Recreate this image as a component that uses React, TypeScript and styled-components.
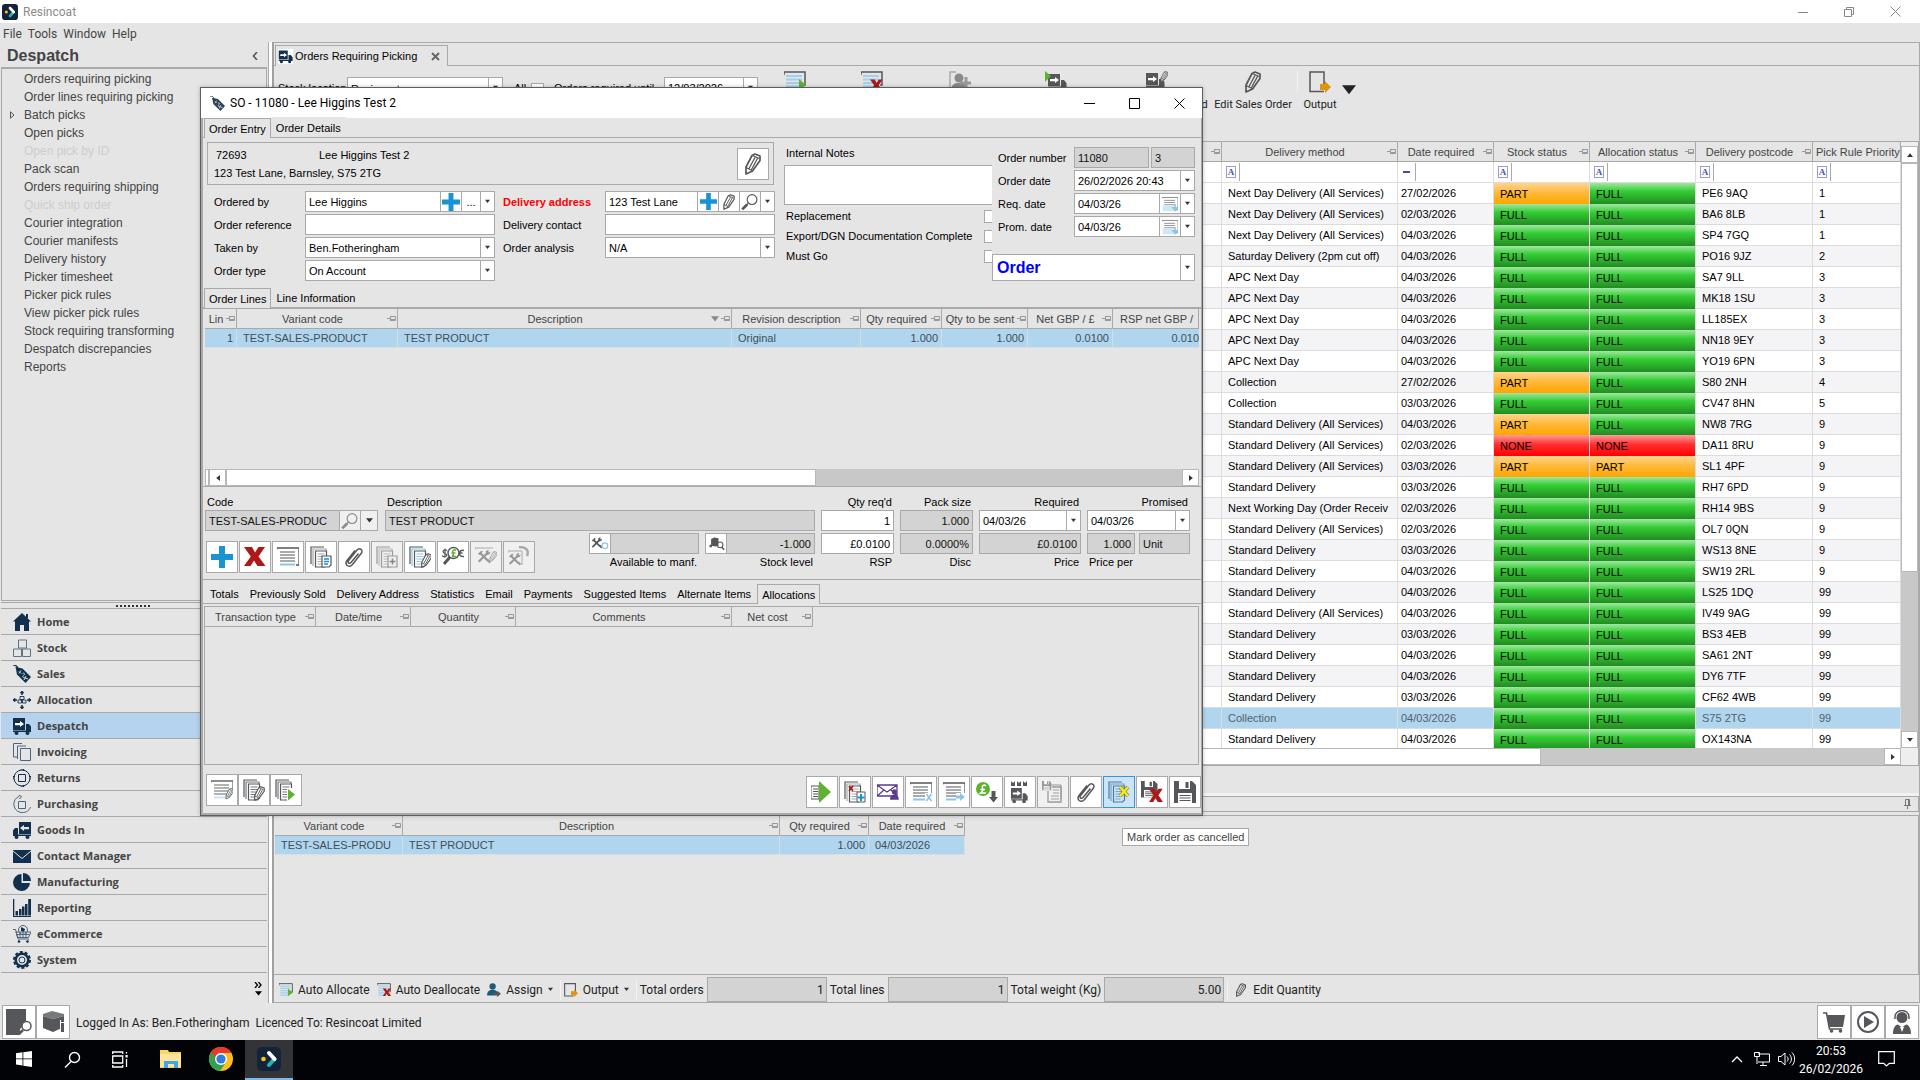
import React from "react";
import styled, { createGlobalStyle, css } from "styled-components";

const UI = `"Liberation Sans", Arial, sans-serif`;
const SEGOE = `Roboto, "Open Sans", sans-serif`;
const NAVFONT = `"Open Sans", "Noto Sans", sans-serif`;
const LINE = "#a9a9a9";
const FACE = "#e5e5e5";
const NAVY = "#12304d";
const GREY = "#55575a";
const BLUE = "#1a93d3";
const GREEN = "#5fb130";
const RED = "#b01717";
const SKY = "#8cc4ea";

const GlobalStyle = createGlobalStyle`
  * { box-sizing: border-box; }
  html, body, #root { margin: 0; height: 100%; }
  body { overflow: hidden; background: ${FACE}; font: 11px/14px ${UI}; color: #000; }
  button, input, select, textarea { font: inherit; color: inherit; margin: 0; padding: 0; border-radius: 0; }
  svg { display: block; flex: none; }
`;

/* ---------- drawings ---------- */

type SvgProps = { w?: number; h?: number; box?: string; children?: React.ReactNode };
const Svg = ({ w = 22, h, box, children }: SvgProps) => (
  <svg width={w} height={h ?? w} viewBox={box ?? "0 0 22 22"} fill="none" aria-hidden="true">
    {children}
  </svg>
);

const DocsShape = ({ c = GREY, lines = "#a5a7aa", fill = "#fff" }) => (
  <g stroke={c} strokeWidth="1.2">
    <path d="M1 18V1h13" />
    <path d="M3 20V3h13v2" stroke={lines} />
    <path d="M5.500 21h9l2-2V5h-11z" fill={fill} />
    <path d="M7.500 8h7M7.500 10.500h7M7.500 13h7M7.500 15.500h5M7.500 18h5" stroke={lines} />
  </g>
);
const PencilShape = ({ c = GREY, t = "", fill = "#fff" }) => (
  <g transform={t} stroke={c} strokeWidth="1.700" strokeLinejoin="round" fill={fill}>
    <path d="M4 21v-7L10 2.500l3-1.500 5 2v4.500L10.500 18z" />
    <path d="M7 15.500l6-11M9.500 16.500l6-11M4 14.500l6 3M10.500 2.500l6.500 3" strokeWidth="1.300" />
  </g>
);
const LinesShape = ({ c = GREY, accent = SKY }) => (
  <g>
    <path d="M0 3.500V2h22v17h-3" stroke={c} strokeWidth="1.300" />
    <path d="M3 6h15M3 9h15M3 12h15M3 15h15" stroke={c} strokeWidth="1.200" />
    <path d="M3 18.500h15" stroke={accent} strokeWidth="2" />
  </g>
);
const ToolsShape = ({ c = GREY, t = "" }) => (
  <g transform={t}>
    <path d="M2 15L12 5M4 5l9 9" stroke={c} strokeWidth="2.600" />
    <path d="M1 6l4-4 2 1-4 4zM10 3l3-2 1 1-1 1 1 1 2-1-1 3-3 1zM11.500 13l2-1 3 3-2 2z" fill={c} />
  </g>
);
const TruckShape = ({ c = NAVY, t = "", arrow = "#fff" }) => (
  <g transform={t}>
    <path d="M0 1h12v12H0zM13 7h3l2.500 3v5H0v-1.500h13z" fill={c} />
    <path d="M2 6h5V4l4 3-4 3V8.200H2z" fill={arrow} />
    <circle cx="3.500" cy="16" r="2" fill={c} />
    <circle cx="14.500" cy="16" r="2" fill={c} />
  </g>
);
const TagShape = ({ c = NAVY }) => (
  <g>
    <path d="M0 0c3 0 4 1 5 3" stroke={c} strokeWidth="1.200" />
    <path d="M2.500 2l7 1.500L18 12l-5.500 6L4 9.500z" fill={c} />
    <path d="M6 6.500l2 2M8 5.500l-2 3M9.500 8.500c2-1 3 1 1 2s0 3 2 2M13 11l-2 4M12 13l3 1" stroke="#cfd8e0" strokeWidth="1" />
  </g>
);
const MagShape = ({ c = GREY, t = "" }) => (
  <g transform={t}>
    <circle cx="13.500" cy="8" r="6" stroke={c} strokeWidth="1.400" />
    <path d="M9 12.500l-2 2" stroke={c} strokeWidth="1.600" />
    <path d="M7.500 14l-6 6" stroke={c} strokeWidth="3.200" />
  </g>
);
const CrossShape = ({ c = RED, t = "" }) => (
  <path transform={t} fill={c} d="M0 1h8l3 5.500L14.500 1H21l-6.500 9.500L21.500 20h-8L10 14.500 6.500 20H0l6.800-9.500z" />
);
const ClipShape = () => (
  <path d="M15.500 7.500L8 16.500c-1.500 1.800-4 .2-2.600-1.800L14 4c2.500-3 6.600.2 4.300 3.200L9.500 18.500C6 22.500.8 18.500 4 14.500L12 4.500" stroke={GREY} strokeWidth="1.500" />
);
const FloppyShape = ({ c = GREY, t = "" }) => (
  <g transform={t}>
    <path d="M0 0h18l4 4v18H0z" fill={c} />
    <path d="M5 0h11v8H5zM4 12h14v10H4z" fill="#fff" />
    <path d="M11.500 1h3v6h-3z" fill={c} />
    <path d="M5.500 14.500h11M5.500 17h11M5.500 19.500h11" stroke={c} strokeWidth="1.200" />
  </g>
);
const PersonShape = ({ c = GREY, t = "" }) => (
  <g transform={t} fill={c}>
    <circle cx="8" cy="5" r="4.500" />
    <path d="M0 18c0-5 2-7 5-8h6c3 1 5 3 5 8z" />
  </g>
);
const AllocShape = ({ c = GREY }) => (
  <g>
    <path d="M0 4V1h21v13h-2" stroke={c} strokeWidth="1.500" />
    <path d="M2 5h16M2 8.500h16M2 12h16M2 15.500h13M2 19h12" stroke="#9fd0ef" strokeWidth="1.800" />
  </g>
);

const Pin = () => (
  <Svg w={9} h={7} box="0 0 9 7">
    <path d="M0 3.500h3M3.500 1v5" stroke="#999" />
    <path d="M4 1.500h4.500v4H4M4 4.500h4" stroke="#999" />
  </Svg>
);
const Logo = ({ w = 16 }) => (
  <Svg w={w} box="0 0 24 24">
    <rect width="24" height="24" rx="5" fill="#12233a" />
    <circle cx="6.500" cy="12" r="2.300" fill="#f9c80e" />
    <path d="M12 18l5.500-6" stroke="#24b5b0" strokeWidth="4" strokeLinecap="round" />
    <path d="M12 6l5.500 6" stroke="#fff" strokeWidth="4" strokeLinecap="round" />
  </Svg>
);
const Tri = ({ dir = "down", c = "#333", w = 6 }: { dir?: string; c?: string; w?: number }) => {
  const turn = { down: 0, left: 90, up: 180, right: 270 }[dir] ?? 0;
  return (
    <Svg w={w} box="0 0 6 6">
      <path transform={`rotate(${turn} 3 3)`} d="M0 1h6L3 4.800z" fill={c} />
    </Svg>
  );
};

const I = {
  plus: <Svg><path d="M8 0h6v8h8v6h-8v8H8v-8H0V8h8z" fill={BLUE} /></Svg>,
  cross: <Svg><CrossShape /></Svg>,
  lines: <Svg><LinesShape /></Svg>,
  docsCopy: <Svg><DocsShape /><path d="M12 10h9v9l-2 2h-7z" fill="#fff" stroke={GREY} strokeWidth="1.200" /><path d="M14 13h5M14 15.500h5M14 18h4" stroke={BLUE} strokeWidth="1.500" /></Svg>,
  clip: <Svg><ClipShape /></Svg>,
  docsAdd: <Svg><DocsShape c="#999" lines="#bbb" fill="#f0f0f0" /><path d="M12 10h9v11h-9z" fill="#f0f0f0" stroke="#999" strokeWidth="1.200" /><path d="M16.500 12.500v6M13.500 15.500h6" stroke="#888" strokeWidth="1.600" /></Svg>,
  docsEdit: <Svg><DocsShape lines={SKY} /><PencilShape t="translate(10 7) scale(.68)" /></Svg>,
  docsEditGrey: <Svg><DocsShape lines="#77797c" /><PencilShape t="translate(9 7) scale(.68)" /></Svg>,
  currency: <Svg><circle cx="11.500" cy="7" r="5.500" stroke={GREY} strokeWidth="1.400" /><path d="M8 11l-6 7" stroke={GREY} strokeWidth="3" /><path d="M5 4.500C3 3 0 4.500 1.500 6.500S6 8 4.500 10 1 10.500 0 9.500M3 2.500v9" stroke={GREY} strokeWidth="1.200" /><path d="M14 4.500c-2-1.500-4 0-3 2.500s0 3-1 3.500h4.500M9.500 7h4" stroke={GREEN} strokeWidth="1.500" /><path d="M22 4.500c-3-1-4.500 1-4.500 3s1.500 3.500 4.500 3M16.500 7h4" stroke={GREY} strokeWidth="1.500" /></Svg>,
  toolsEdit: <Svg><path d="M0 4V2h18" stroke="#aaa" /><ToolsShape c="#999" t="translate(2 3) scale(.85)" /><PencilShape c="#999" fill="#f0f0f0" t="translate(13 5) scale(.5)" /></Svg>,
  toolsUndo: <Svg><path d="M0 7V5h14v14" stroke="#aaa" /><ToolsShape c="#999" t="translate(0 6) scale(.8)" /><path d="M11 1c8 0 10 4 8 9" stroke="#aaa" strokeWidth="2.500" /></Svg>,
  linesEdit: <Svg><LinesShape c="#66686b" accent="#c9e3f5" /><path d="M17 13h5v8h-8z" fill="#fff" /><PencilShape t="translate(13 9) scale(.52)" /></Svg>,
  docsRun: <Svg><DocsShape lines="#77797c" /><path d="M12 9h10v13H12z" fill="#fff" /><path d="M13 10l7 5.500-7 6z" fill={GREEN} /></Svg>,
  run: <Svg><path d="M0 5h8v13H0z" stroke={GREY} /><path d="M2 8h5M2 10.500h5M2 13h5M2 15.500h5" stroke={GREY} /><path d="M8 0l12 11L8 22z" fill={GREEN} /></Svg>,
  docsBlue: <Svg><DocsShape /><path d="M5 5l4 5M9 5l-4 5" stroke={RED} strokeWidth="1.600" /><path d="M13 11h8v10h-8z" fill="#fff" stroke={GREY} /><path d="M17 13v7M13.500 16.500h7" stroke={BLUE} strokeWidth="2" /></Svg>,
  mail: <Svg><path d="M0 4h20v11H0zM0 4l10 7 10-7M0 15l7-6M20 15l-6-6" stroke="#5c3a8c" strokeWidth="1.300" /><PersonShape c="#5c3a8c" t="translate(13 8) scale(.55 .6)" /></Svg>,
  linesX: <Svg><LinesShape /><path d="M15 12h7v9h-7z" fill="#fff" /><path d="M16.500 13l5 7M21.500 13l-5 7" stroke={SKY} strokeWidth="1.600" /></Svg>,
  linesGo: <Svg><LinesShape /><path d="M13 12h9v9h-9z" fill="#fff" /><path d="M13 14.500h4V12l5 4-5 4v-2.500h-4z" fill={SKY} /></Svg>,
  poundDown: <Svg><circle cx="7" cy="8" r="7" fill={GREEN} /><path d="M10 5c-2-2-4.500-.5-3.500 2S6 11 4.500 12H10M4.500 8.500h4.500" stroke="#fff" strokeWidth="1.500" /><path d="M15.500 10h4v6h2.500l-4.500 5.500-4.500-5.500h2.500z" fill={GREY} /></Svg>,
  truck: <Svg><path d="M2 0l2 2 2-2v5H2zM8 0l2 2 2-2v5H8zM14 0l2 2 2-2v5h-4z" fill={GREY} /><TruckShape c={GREY} t="translate(2 6) scale(.9)" /></Svg>,
  saveDocs: <Svg><FloppyShape c="#999" t="scale(.42)" /><path d="M8 6V4h11v14" stroke="#999" /><path d="M10 6h9v15H6V10" stroke="#999" strokeWidth="1.300" /><path d="M11 9h6M11 12h6M9 15h8M9 18h8" stroke="#bbb" strokeWidth="1.300" /></Svg>,
  docsCancel: <Svg><DocsShape c="#4e7a9c" lines="#7da3c0" fill="#cce4f7" /><path d="M12 6l8 9M20 6l-8 9" stroke="#8d8520" strokeWidth="3.600" /><path d="M12 6l8 9M20 6l-8 9" stroke="#f7e928" strokeWidth="2.400" /></Svg>,
  saveX: <Svg><FloppyShape t="scale(.75)" /><CrossShape t="translate(8 7) scale(.65 .7)" /></Svg>,
  save: <Svg><FloppyShape /></Svg>,
};

/* ---------- shared parts ---------- */

const Bar = styled.div<{ $gap?: number }>`
  display: flex;
  align-items: center;
  gap: ${p => p.$gap ?? 0}px;
`;
const Grow = styled.div`
  flex: 1;
  min-width: 0;
`;
const Field = styled.div<{ $ro?: boolean; $w?: number; $tall?: boolean }>`
  display: flex;
  ${p => (p.$w ? `width: ${p.$w}px;` : "")}
  height: ${p => (p.$tall ? 27 : 21)}px;
  border: 1px solid ${LINE};
  background: ${p => (p.$ro ? "#d3d3d3" : "#fff")};
  color: ${p => (p.$ro ? "#111" : "#000")};
`;
const control = css<{ $right?: boolean }>`
  flex: 1;
  min-width: 0;
  width: 100%;
  height: 100%;
  border: 0;
  outline: 0;
  background: transparent;
  appearance: none;
  padding: 0 3px;
  text-align: ${p => (p.$right ? "right" : "left")};
`;
const Input = styled.input`${control}`;
const Select = styled.select<{ $big?: boolean }>`
  ${control}
  ${p => (p.$big ? "font: bold 16px/24px " + UI + "; color: #00f; padding: 0 4px;" : "")}
`;
const Cell = styled.button<{ $w: number; $dim?: boolean; $lead?: boolean }>`
  display: flex;
  align-items: center;
  justify-content: center;
  width: ${p => p.$w}px;
  border: solid ${LINE};
  border-width: ${p => (p.$lead ? "0 1px 0 0" : "0 0 0 1px")};
  background: ${p => (p.$dim ? "#f0f0f0" : "#fff")};
  flex: none;
`;
const Drop = () => <Cell $w={14} aria-label="Open list"><Tri w={5} /></Cell>;
const DropMark = styled.span`
  display: flex;
  align-items: center;
  justify-content: center;
  width: 14px;
  border-left: 1px solid ${LINE};
`;
const Combo = ({ id, value, label, $big }: { id?: string; value: string; label?: string; $big?: boolean }) => (
  <Field $tall={$big}>
    <Select id={id} aria-label={label} defaultValue={value} $big={$big}><option>{value}</option></Select>
    <DropMark><Tri w={5} /></DropMark>
  </Field>
);
const Tool = styled.button<{ $off?: boolean; $hot?: boolean; $size?: number }>`
  display: flex;
  align-items: center;
  justify-content: center;
  width: ${p => p.$size ?? 32}px;
  height: ${p => p.$size ?? 32}px;
  border: 1px solid ${p => (p.$hot ? "#3c94d8" : LINE)};
  background: ${p => (p.$hot ? "#cce4f7" : p.$off ? "#f0f0f0" : "#fff")};
  flex: none;
`;
const Tabs = styled.div<{ $thick?: boolean; $h?: number; $gap?: number }>`
  display: flex;
  align-items: flex-end;
  gap: ${p => p.$gap ?? 0}px;
  height: ${p => p.$h ?? 20}px;
  padding-left: ${p => (p.$gap ? 2 : 1)}px;
  border-bottom: ${p => (p.$thick ? 2 : 1)}px solid ${LINE};
  flex: none;
`;
const Tab = styled.button<{ $on?: boolean }>`
  height: 20px;
  padding: 0 4px;
  border: 1px solid ${p => (p.$on ? LINE : "transparent")};
  border-bottom: 0;
  background: ${FACE};
  margin-bottom: ${p => (p.$on ? -1 : 0)}px;
  white-space: nowrap;
`;
const Table = styled.table`
  table-layout: fixed;
  border-collapse: separate;
  border-spacing: 0;
  width: 100%;
`;
const Th = styled.th`
  height: 20px;
  padding: 0 1px 0 3px;
  border-right: 1px solid ${LINE};
  border-bottom: 1px solid ${LINE};
  background: ${FACE};
  font-weight: normal;
  color: #444;
  overflow: hidden;
`;
const HeadBox = styled.div`
  display: flex;
  align-items: center;
  gap: 2px;
  white-space: nowrap;
  span { flex: 1; }
`;
const Head = ({ text, pin = true, sort }: { text: string; pin?: boolean; sort?: boolean }) => (
  <Th scope="col"><HeadBox><span>{text}</span>{sort && <Tri w={8} c="#888" />}{pin && <Pin />}</HeadBox></Th>
);
const Num = styled.td`
  text-align: right;
`;
const SelRow = styled.tr<{ $flush?: boolean }>`
  td {
    height: 19px;
    padding: 0 3px 0 6px;
    background: #b0d6ef;
    border-right: 1px solid #d7dde2;
    border-bottom: 1px solid #d7dde2;
    color: #444c55;
    white-space: nowrap;
    overflow: hidden;
  }
  ${p => (p.$flush ? "td:last-child { padding-right: 0; border-right: 0; }" : "")}
`;
const ScrollBtn = styled.button`
  display: flex;
  align-items: center;
  justify-content: center;
  width: 17px;
  height: 17px;
  border: 1px solid #b8b8b8;
  background: #fff;
  flex: none;
`;
const HTrack = styled.div`
  display: flex;
  height: 17px;
  background: #c8c8c8;
  flex: none;
`;
const Thumb = styled.div<{ $size: string; $v?: boolean }>`
  ${p => (p.$v ? "height" : "width")}: ${p => p.$size};
  background: #fff;
  border: 1px solid #b8b8b8;
`;
const Sep = styled.i`
  width: 1px;
  height: 20px;
  background: #f4f4f4;
`;

/* ---------- shell ---------- */

const Page = styled.div`
  position: relative;
  display: flex;
  flex-direction: column;
  height: 100vh;
  overflow: hidden;
`;
const TitleBar = styled.header`
  display: flex;
  align-items: center;
  height: 23px;
  padding: 0 2px;
  background: #fff;
  color: #8a8a8a;
  font: 12px/16px ${SEGOE};
  span { margin-left: 5px; flex: 1; }
`;
const WinBtn = styled.button<{ $w: number }>`
  display: flex;
  justify-content: center;
  align-items: center;
  width: ${p => p.$w}px;
  height: 20px;
  border: 0;
  background: transparent;
`;
const MenuBar = styled.nav`
  display: flex;
  height: 19px;
  padding: 3px 3px 0;
  gap: 6px;
  button { border: 0; background: none; color: #444; font: 12px/16px ${SEGOE}; }
`;
const Work = styled.div`
  display: flex;
  flex: 1;
  min-height: 0;
`;
const Side = styled.aside`
  display: flex;
  flex-direction: column;
  width: 268px;
  padding: 0 1px;
  flex: none;
`;
const SideHead = styled.div`
  display: flex;
  align-items: center;
  justify-content: space-between;
  height: 25px;
  padding: 2px 8px 0 6px;
  h1 { margin: 0; font: bold 16px/20px ${UI}; color: #444; }
`;
const SideList = styled.ul`
  flex: 1;
  margin: 0;
  padding: 1px 0 0;
  list-style: none;
  border: 1px solid ${LINE};
  border-top-width: 2px;
`;
const SideItem = styled.li<{ $off?: boolean }>`
  display: flex;
  align-items: center;
  height: 18px;
  padding-left: 8px;
  i { width: 14px; }
  a { color: ${p => (p.$off ? "#cdcdcd" : "#444")}; text-decoration: none; font-size: 12px; }
`;
const Grip = styled.div`
  display: flex;
  justify-content: center;
  align-items: center;
  height: 7px;
  margin-top: 1px;
  border: solid ${LINE};
  border-width: 1px 0;
`;
const NavItem = styled.button<{ $on?: boolean }>`
  display: flex;
  align-items: center;
  gap: 6px;
  height: 26px;
  padding: 1px 0 0 12px;
  border: 0;
  border-bottom: 1px solid ${LINE};
  background: ${p => (p.$on ? "#b5d3ef" : "transparent")};
  font: bold 11px/16px ${NAVFONT};
  color: #444;
  flex: none;
`;
const NavMore = styled.div`
  display: flex;
  flex-direction: column;
  align-items: flex-end;
  gap: 2px;
  height: 30px;
  padding: 9px 5px;
`;
const Split = styled.div`
  width: 4px;
  background: #fff;
  border-left: 1px solid ${LINE};
`;
const Main = styled.main`
  display: flex;
  flex-direction: column;
  flex: 1;
  min-width: 0;
  border: 1px solid ${LINE};
  border-left: 2px solid #a0a0a0;
`;
const DocTab = styled.button`
  display: flex;
  align-items: center;
  gap: 2px;
  height: 21px;
  width: 173px;
  padding: 0 7px 0 2px;
  border: 1px solid ${LINE};
  border-bottom: 0;
  margin-bottom: -1px;
  background: ${FACE};
  span { flex: 1; text-align: left; white-space: nowrap; }
`;
const Ribbon = styled.div`
  display: flex;
  height: 75px;
  padding: 5px 4px 0;
  flex: none;
`;
const Filters = styled.div`
  display: flex;
  align-items: flex-start;
  width: 481px;
  padding-top: 6px;
  line-height: 23px;
  flex: none;
  white-space: nowrap;
  input[type="checkbox"] { appearance: none; width: 13px; height: 13px; margin: 6px 10px 0 0; border: 1px solid ${LINE}; background: #fff; }
`;
const FilterLabel = styled.label<{ $w: number; $end?: boolean }>`
  width: ${p => p.$w}px;
  padding-left: ${p => (p.$end ? 11 : 0)}px;
  flex: none;
`;
const RibbonBtn = styled.button<{ $w: number }>`
  display: flex;
  flex-direction: column;
  align-items: center;
  gap: 4px;
  height: 45px;
  width: ${p => p.$w}px;
  border: 0;
  background: none;
  font: 11px/16px ${SEGOE};
  color: #222;
  white-space: nowrap;
  flex: none;
`;
const RibbonDrop = styled.button`
  display: flex;
  align-items: center;
  height: 37px;
  border: 0;
  background: none;
`;
const OrdersBox = styled.section`
  display: flex;
  flex: 1;
  min-height: 0;
  border: 1px solid ${LINE};
  border-left: 0;
`;
const OrdersCol = styled.div`
  display: flex;
  flex-direction: column;
  flex: 1;
  min-width: 0;
`;
const TableArea = styled.div`
  flex: 1;
  overflow: hidden;
`;
const VScroll = styled.div`
  display: flex;
  flex-direction: column;
  width: 17px;
  padding: 4px 0 17px;
  background: #eee;
`;
const VTrack = styled.div`
  flex: 1;
  background: #c8c8c8;
`;
const FilterRow = styled.tr`
  td { height: 21px; padding: 0; background: #fff; border-right: 1px solid #ddd; border-bottom: 1px solid #ddd; }
`;
const FilterCell = styled.div`
  display: flex;
  align-items: center;
  height: 20px;
  padding-left: 4px;
  i { width: 14px; height: 18px; border-right: 1px solid ${LINE}; display: flex; align-items: center; }
  b { font: bold 9px/10px "Liberation Serif", serif; color: #4a4ab5; border: 1px solid #9c9cd0; width: 10px; text-align: center; }
`;
const Row = styled.tr<{ $alt?: boolean; $sel?: boolean }>`
  td {
    height: 21px;
    padding: 0 2px 0 6px;
    border-right: 1px solid #dcdcdc;
    border-bottom: 1px solid #dcdcdc;
    background: ${p => (p.$sel ? "#b0d6ef" : p.$alt ? "#f4f4f6" : "#fff")};
    color: ${p => (p.$sel ? "#555f68" : "#000")};
    white-space: nowrap;
    overflow: hidden;
  }
  td:nth-child(3) { padding-left: 3px; }
`;
const fills: Record<string, string> = {
  F: "linear-gradient(#a2e6a2, #32cd32 40%, #2fbd2f 55%, #228b22)",
  P: "linear-gradient(#ffd590, #ffb93c 45%, #ffa500)",
  N: "linear-gradient(#ff9a9a, #ff3030 45%, #f00)",
};
const Status = styled.td<{ $kind: string }>`
  && { background: ${p => fills[p.$kind]}; border-bottom: 0; color: #000; }
`;
const Gap = styled.div`
  height: 30px;
  border-bottom: 3px solid #f2f2f2;
  flex: none;
`;
const PanelHead = styled.div`
  display: flex;
  align-items: center;
  justify-content: flex-end;
  height: 16px;
  padding-right: 7px;
  border: 1px solid ${LINE};
  flex: none;
`;
const Lower = styled.section`
  height: 160px;
  margin-top: 3px;
  border: solid ${LINE};
  border-width: 1px 1px 1px 0;
  flex: none;
`;
const LowerTable = styled.div`
  width: 691px;
  padding-left: 1px;
`;
const FootBar = styled.div`
  display: flex;
  align-items: center;
  height: 27px;
  padding: 2px 0 0 5px;
  font: 12px/16px ${SEGOE};
  color: #222;
  flex: none;
  white-space: nowrap;
`;
const FootBtn = styled.button`
  display: flex;
  align-items: center;
  gap: 5px;
  border: 0;
  background: none;
  margin-right: 7px;
`;
const FootLabel = styled.label`
  padding: 0 3px;
`;
const Total = styled.input`
  width: 120px;
  height: 25px;
  border: 1px solid ${LINE};
  background: #d3d3d3;
  text-align: right;
  padding-right: 2px;
`;
const StatusBar = styled.footer`
  display: flex;
  align-items: center;
  height: 37px;
  padding: 0 1px 0 2px;
  font: 12px/16px ${SEGOE};
  color: #222;
  p { margin: 0 0 0 6px; padding-top: 3px; flex: 1; white-space: pre; }
`;
const TaskBar = styled.div`
  display: flex;
  align-items: center;
  height: 40px;
  background: #020307;
  color: #fff;
  font: 12px/18px ${SEGOE};
  flex: none;
`;
const Task = styled.button<{ $on?: boolean; $w?: number }>`
  display: flex;
  align-items: center;
  justify-content: center;
  width: ${p => p.$w ?? 48}px;
  height: 40px;
  border: 0;
  border-bottom: 2px solid ${p => (p.$on ? "#76b9ed" : "transparent")};
  background: ${p => (p.$on ? "#333437" : "transparent")};
`;
const Clock = styled.div`
  width: 66px;
  text-align: center;
`;

/* ---------- dialog ---------- */

const Dialog = styled.section`
  position: absolute;
  left: 200px;
  top: 87px;
  width: 1003px;
  height: 729px;
  display: flex;
  flex-direction: column;
  border: 1px solid #5d5d5d;
  background: ${FACE};
  box-shadow: 0 0 4px rgba(0, 0, 0, 0.25);
`;
const DialogTitle = styled.div`
  display: flex;
  align-items: center;
  gap: 5px;
  height: 30px;
  padding: 0 2px 0 9px;
  background: #fff;
  font: 12px/16px ${SEGOE};
  flex: none;
`;
const DialogBody = styled.div`
  display: flex;
  flex-direction: column;
  flex: 1;
  min-height: 0;
  border: solid ${LINE};
  border-width: 0 1px 2px 2px;
`;
const Top = styled.div`
  display: flex;
  height: 150px;
  padding: 4px 6px 0 4px;
  flex: none;
`;
const Left = styled.div`
  width: 567px;
  flex: none;
`;
const Customer = styled.div`
  display: flex;
  justify-content: space-between;
  align-items: center;
  height: 43px;
  padding: 0 4px 0 6px;
  border: 1px solid ${LINE};
  dl { display: grid; grid-template-columns: 105px auto; margin: 0; row-gap: 4px; }
  dd { margin: 0; }
  dd:last-child { grid-column: 1 / 3; }
  dt { padding-left: 2px; }
`;
const Form = styled.div`
  display: grid;
  grid-template-columns: 91px 190px 8px 102px 170px;
  row-gap: 2px;
  align-items: center;
  padding: 6px 0 0 7px;
  white-space: nowrap;
`;
const FormLabel = styled.label<{ $alert?: boolean; $second?: boolean }>`
  grid-column: ${p => (p.$second ? 4 : "auto")};
  ${p => (p.$alert ? "color: #f00; font-weight: bold;" : "")}
`;
const Notes = styled.div`
  flex: 1;
  min-width: 0;
  margin-left: 10px;
  padding-top: 4px;
  overflow: hidden;
  > label { padding-left: 2px; }
  textarea { display: block; width: 220px; height: 40px; margin: 5px 0 1px; border: 1px solid ${LINE}; resize: none; }
`;
const Tick = styled.div`
  display: flex;
  align-items: center;
  justify-content: space-between;
  width: 213px;
  height: 20px;
  padding-left: 2px;
  white-space: nowrap;
  input { appearance: none; width: 13px; height: 13px; border: 1px solid ${LINE}; background: #fff; }
`;
const Right = styled.div`
  width: 203px;
  padding-top: 5px;
  flex: none;
`;
const Heads = styled.div`
  display: grid;
  grid-template-columns: 76px 121px;
  gap: 2px 0;
  align-items: center;
  padding: 0 0 17px 6px;
`;
const Lines = styled.div`
  display: flex;
  flex-direction: column;
  justify-content: space-between;
  height: 178px;
  padding: 0 2px;
  border-bottom: 1px solid ${LINE};
  overflow: hidden;
  flex: none;
`;
const Detail = styled.div`
  height: 93px;
  padding: 9px 11px 0 2px;
  border-bottom: 1px solid ${LINE};
  flex: none;
  display: flex;
  gap: 6px;
  white-space: nowrap;
`;
const Stack = styled.div<{ $w?: number }>`
  display: flex;
  flex-direction: column;
  gap: 2px;
  ${p => (p.$w ? `width: ${p.$w}px; flex: none;` : "flex: 1; min-width: 0;")}
`;
const ToolRow = styled.div`
  display: flex;
  align-items: flex-start;
  gap: 6px;
`;
const LineTools = styled.div`
  display: flex;
  gap: 1px;
  padding: 8px 0 0 1px;
`;
const Cap = styled.label<{ $left?: boolean }>`
  display: block;
  height: 14px;
  line-height: 13px;
  padding: 0 2px;
  text-align: ${p => (p.$left ? "left" : "right")};
`;
const Alloc = styled.div`
  flex: 1;
  margin: 2px 2px 0 1px;
  border: 1px solid ${LINE};
`;
const AllocTable = styled.div`
  width: 608px;
`;
const DialogFoot = styled.div`
  display: flex;
  align-items: flex-end;
  justify-content: space-between;
  height: 48px;
  padding: 0 0 5px 3px;
  flex: none;
`;
const FootLeft = styled.div`
  display: flex;
  padding-bottom: 2px;
`;
const Tooltip = styled.div`
  position: absolute;
  left: 1122px;
  top: 828px;
  height: 18px;
  padding: 1px 4px;
  border: 1px solid ${LINE};
  background: #fff;
  color: #444;
  white-space: nowrap;
`;

/* ---------- data ---------- */

const sideLinks = ["Orders requiring picking", "Order lines requiring picking", "Batch picks", "Open picks", "Open pick by ID", "Pack scan", "Orders requiring shipping", "Quick ship order", "Courier integration", "Courier manifests", "Delivery history", "Picker timesheet", "Picker pick rules", "View picker pick rules", "Stock requiring transforming", "Despatch discrepancies", "Reports"];

const navs: [string, React.ReactNode][] = [
  ["Home", <path d="M9 0l9 8.500h-2V18h-5v-6H7v6H2V8.500H0zM13 1h2v4h-2z" fill={NAVY} />],
  ["Stock", <path d="M5.500 1h8v8h-8zM.5 10h8v7.500h-8zM9.500 10h8v7.500h-8z" stroke="#5c7489" strokeWidth="1" />],
  ["Sales", <TagShape />],
  ["Allocation", <g stroke={NAVY}><path d="M7 5.500h4v3H7zM5 9h3.500v3H5zM9.500 9H13v3H9.500z" strokeWidth=".9" /><path d="M9 0v4M9 14v4M0 9h4M14 9h4" strokeWidth="1.500" /><path d="M7 2l2-2 2 2zM7 16l2 2 2-2zM2 7L0 9l2 2zM16 7l2 2-2 2z" fill={NAVY} strokeWidth=".6" /></g>],
  ["Despatch", <TruckShape />],
  ["Invoicing", <g stroke="#4c657c"><path d="M.5 14V.5H9M.5 14H4M4.500 16V3H13" /><path d="M7.500 5.500h10V17.500h-10z" /></g>],
  ["Returns", <g stroke={NAVY} strokeWidth="1.2"><circle cx="9" cy="9" r="8" strokeWidth="1" /><path d="M5.500 5.500h7v7h-7z" strokeWidth="1" /><path d="M7.500 0h3v2M16 7.500h2v3M7.500 18h3v-2M2 7.500H0v3" /></g>],
  ["Purchasing", <g stroke="#4c657c"><path d="M6 1.500C-1 4-1 15 7 17.300c5 1 9-1 10.500-5.300" /><path d="M5.500 6.500h7v7h-7z" /><path d="M5.500 0l3 1.500-2 2.500" /></g>],
  ["Goods In", <g transform="translate(18 0) scale(-1 1)"><TruckShape arrow={FACE} /></g>],
  ["Contact Manager", <g><path d="M0 3h18v13H0z" fill={NAVY} /><path d="M0 4l9 7.500L18 4" stroke="#dfe4e9" /></g>],
  ["Manufacturing", <g fill={NAVY}><path d="M8.500 1a8.500 8.500 0 108.500 9H8.500z" /><path d="M10 0a8 8 0 018 8h-8z" /></g>],
  ["Reporting", <path d="M0 0h1.300v17H18v1H0zM2.500 12h2.500v4.500H2.500zM6 10h2.500v6.500H6zM9 7.500h2.500v9H9zM12 5h2.500v11.500H12zM15.200 0h2.800v16.500h-2.800z" fill={NAVY} />],
  ["eCommerce", <g><circle cx="10" cy="5" r="4.500" stroke="#4c657c" /><path d="M8 2l4 2-1 3-3-1z" fill={NAVY} /><path d="M0 4.500h2.500L5 14h11M3 7h15l-2.500 5.500H4.500zM3.500 9.500h13M7 7v5.500M10 7v5.500M13 7v5.500" stroke="#4c657c" /><circle cx="6" cy="16.500" r="1.300" fill={NAVY} /><circle cx="14.500" cy="16.500" r="1.300" fill={NAVY} /></g>],
  ["System", <g stroke={NAVY}><circle cx="9" cy="9" r="6.300" strokeWidth="2.600" /><circle cx="9" cy="9" r="8" strokeWidth="2" strokeDasharray="3 2.030" /><circle cx="9" cy="9" r="3" strokeWidth="1" /></g>],
];

const ND = "Next Day Delivery (All Services)", AP = "APC Next Day", SA = "Standard Delivery (All Services)", SD = "Standard Delivery", CO = "Collection";
const orders: [string, string, string, string, string][] = [
  [ND, "27/02/2026", "PF", "PE6 9AQ", "1"],
  [ND, "02/03/2026", "FF", "BA6 8LB", "1"],
  [ND, "04/03/2026", "FF", "SP4 7GQ", "1"],
  ["Saturday Delivery (2pm cut off)", "04/03/2026", "FF", "PO16 9JZ", "2"],
  [AP, "04/03/2026", "FF", "SA7 9LL", "3"],
  [AP, "04/03/2026", "FF", "MK18 1SU", "3"],
  [AP, "04/03/2026", "FF", "LL185EX", "3"],
  [AP, "04/03/2026", "FF", "NN18 9EY", "3"],
  [AP, "04/03/2026", "FF", "YO19 6PN", "3"],
  [CO, "27/02/2026", "PF", "S80 2NH", "4"],
  [CO, "03/03/2026", "FF", "CV47 8HN", "5"],
  [SA, "04/03/2026", "PF", "NW8 7RG", "9"],
  [SA, "02/03/2026", "NN", "DA11 8RU", "9"],
  [SA, "03/03/2026", "PP", "SL1 4PF", "9"],
  [SD, "03/03/2026", "FF", "RH7 6PD", "9"],
  ["Next Working Day (Order Receiv", "02/03/2026", "FF", "RH14 9BS", "9"],
  [SA, "02/03/2026", "FF", "OL7 0QN", "9"],
  [SD, "03/03/2026", "FF", "WS13 8NE", "9"],
  [SD, "04/03/2026", "FF", "SW19 2RL", "9"],
  [SD, "04/03/2026", "FF", "LS25 1DQ", "99"],
  [SA, "04/03/2026", "FF", "IV49 9AG", "99"],
  [SD, "03/03/2026", "FF", "BS3 4EB", "99"],
  [SD, "04/03/2026", "FF", "SA61 2NT", "99"],
  [SD, "04/03/2026", "FF", "DY6 7TF", "99"],
  [SD, "03/03/2026", "FF", "CF62 4WB", "99"],
  [CO, "04/03/2026", "FF", "S75 2TG", "99"],
  [SD, "04/03/2026", "FF", "OX143NA", "99"],
];
const word: Record<string, string> = { F: "FULL", P: "PART", N: "NONE" };

const Cols = ({ w }: { w: (number | null)[] }) => (
  <colgroup>{w.map((n, i) => <col key={i} width={n ?? undefined} />)}</colgroup>
);

/* ---------- sections ---------- */

const Sidebar = () => (
  <Side>
    <SideHead><h1>Despatch</h1><Svg w={8} box="0 0 8 8"><path d="M6 0L2.500 4 6 8" stroke="#555" strokeWidth="1.600" /></Svg></SideHead>
    <SideList>
      {sideLinks.map((t, i) => (
        <SideItem key={t} $off={i === 4 || i === 7}>
          <i>{i === 2 && <Svg w={5} h={8} box="0 0 5 8"><path d="M.5.8v6.400L4 4z" stroke="#555" /></Svg>}</i>
          <a href="#">{t}</a>
        </SideItem>
      ))}
    </SideList>
    <Grip><Svg w={36} h={2} box="0 0 36 2"><path d="M0 1h36" stroke="#333" strokeWidth="2" strokeDasharray="2 2" /></Svg></Grip>
    {navs.map(([t, art]) => (
      <NavItem key={t} $on={t === "Despatch"}><Svg w={18} box="0 0 18 18">{art}</Svg>{t}</NavItem>
    ))}
    <NavMore>
      <Svg w={8} h={6} box="0 0 8 6"><path d="M1 0l2.500 3L1 6M4.500 0L7 3 4.500 6" stroke="#000" strokeWidth="1.300" /></Svg>
      <Tri c="#000" w={7} />
    </NavMore>
  </Side>
);

const OrdersGrid = () => (
  <OrdersBox>
    <OrdersCol>
      <TableArea>
        <Table>
          <Cols w={[null, 176, 96, 96, 106, 117, 88]} />
          <thead>
            <tr>
              <Head text="" /><Head text="Delivery method" /><Head text="Date required" /><Head text="Stock status" />
              <Head text="Allocation status" /><Head text="Delivery postcode" /><Head text="Pick Rule Priority" pin={false} />
            </tr>
          </thead>
          <tbody>
            <FilterRow>
              <td />
              {["A", "–", "A", "A", "A", "A"].map((f, i) => (
                <td key={i}><FilterCell><i>{f === "A" ? <b>A</b> : <Svg w={8} h={2} box="0 0 8 2"><path d="M1 0h7v2H1z" fill="#4a4a9a" /></Svg>}</i></FilterCell></td>
              ))}
            </FilterRow>
            {orders.map(([m, d, s, pc, pr], i) => (
              <Row key={pc} $alt={i % 2 === 1} $sel={pc === "S75 2TG"}>
                <td /><td>{m}</td><td>{d}</td>
                <Status $kind={s[0]}>{word[s[0]]}</Status><Status $kind={s[1]}>{word[s[1]]}</Status>
                <td>{pc}</td><td>{pr}</td>
              </Row>
            ))}
          </tbody>
        </Table>
      </TableArea>
      <HTrack><Thumb $size="1267px" /><Grow /><ScrollBtn aria-label="Scroll right"><Tri dir="right" /></ScrollBtn></HTrack>
    </OrdersCol>
    <VScroll>
      <ScrollBtn aria-label="Scroll up"><Tri dir="up" /></ScrollBtn>
      <VTrack><Thumb $v $size="72%" /></VTrack>
      <ScrollBtn aria-label="Scroll down"><Tri /></ScrollBtn>
    </VScroll>
  </OrdersBox>
);

const MainPane = () => (
  <Main>
    <Tabs $h={23}>
      <DocTab>
        <Svg w={15} box="-1 -1 20 20"><path d="M-1-1h20v20H-1z" fill="#fff" /><TruckShape /></Svg>
        <span>Orders Requiring Picking</span>
        <Svg w={9} box="0 0 9 9"><path d="M1 1l7 7M8 1L1 8" stroke="#666" strokeWidth="2" /></Svg>
      </DocTab>
    </Tabs>
    <Ribbon>
      <Filters>
        <FilterLabel $w={69} htmlFor="loc">Stock location</FilterLabel>
        <Field $w={156}><Select id="loc"><option>Resincoat</option></Select><DropMark><Tri w={5} /></DropMark></Field>
        <FilterLabel $w={28} $end htmlFor="all">All</FilterLabel>
        <input type="checkbox" id="all" />
        <FilterLabel $w={110} htmlFor="due">Orders required until</FilterLabel>
        <Field $w={94}><Input id="due" defaultValue="12/03/2026" /><Drop /></Field>
      </Filters>
      <RibbonBtn $w={72}><Svg><AllocShape /><path d="M15 8l7 6-7 6z" fill={GREEN} /></Svg>Allocate</RibbonBtn>
      <RibbonBtn $w={82}><Svg><AllocShape /><CrossShape t="translate(9 8) scale(.6)" /></Svg>Deallocate</RibbonBtn>
      <RibbonBtn $w={94}><Svg><path d="M7 1H1v20" stroke="#aaa" strokeWidth="1.500" /><PersonShape c="#8a8a8a" t="translate(2 2)" /><path d="M17 6v12M11 12h11" stroke="#999" strokeWidth="3" /></Svg>Assign</RibbonBtn>
      <RibbonBtn $w={98}><Svg><TruckShape c={GREY} t="translate(3 2)" /><path d="M0 0l6 5-6 6z" fill={GREEN} /></Svg>Start Pick</RibbonBtn>
      <RibbonBtn $w={104}><Svg><TruckShape c={GREY} t="translate(0 1)" /><PencilShape fill={FACE} t="translate(13 0) scale(.5)" /></Svg>Mark As Despatched</RibbonBtn>
      <RibbonBtn $w={88}><Svg><PencilShape fill={FACE} /></Svg>Edit Sales Order</RibbonBtn>
      <Sep />
      <RibbonBtn $w={44}><Svg><path d="M15 20.500H1V1h14v12" stroke={GREY} strokeWidth="1.500" /><path d="M11 13h5v-3l6 6-6 6v-3h-5z" fill="#e0930f" /></Svg>Output</RibbonBtn>
      <RibbonDrop aria-label="Output options"><Tri w={14} c="#222" /></RibbonDrop>
    </Ribbon>
    <OrdersGrid />
    <Gap />
    <PanelHead><Svg w={7} h={10} box="0 0 7 10"><path d="M1.500 6V.5h4V6M0 6.500h7M3.500 7v3M4.500 1v5" stroke="#777" /></Svg></PanelHead>
    <Lower>
      <LowerTable>
        <Table>
          <Cols w={[128, 377, 89, 96]} />
          <thead><tr><Head text="Variant code" /><Head text="Description" /><Head text="Qty required" /><Head text="Date required" /></tr></thead>
          <tbody><SelRow><td>TEST-SALES-PRODU</td><td>TEST PRODUCT</td><Num>1.000</Num><td>04/03/2026</td></SelRow></tbody>
        </Table>
      </LowerTable>
    </Lower>
    <FootBar>
      <FootBtn><Svg w={14}><AllocShape /><path d="M14 9l8 6-8 6z" fill={GREEN} /></Svg>Auto Allocate</FootBtn>
      <FootBtn><Svg w={14}><AllocShape /><CrossShape t="translate(9 8) scale(.62)" /></Svg>Auto Deallocate</FootBtn>
      <FootBtn><Svg w={14}><PersonShape c="#1c5a78" t="scale(1.1)" /><path d="M10 15h6v-3l6 5-6 5v-3h-6z" fill={GREY} /></Svg>Assign<Tri w={5} /></FootBtn>
      <Sep />&nbsp;
      <FootBtn><Svg w={14}><path d="M15 20.500H1V1h17v12" stroke={GREY} strokeWidth="1.700" /><path d="M11 13h5v-3l6 6-6 6v-3h-5z" fill="#e0930f" /></Svg>Output<Tri w={5} /></FootBtn>
      <Sep />
      <FootLabel htmlFor="to">Total orders</FootLabel><Total id="to" readOnly value="1" />
      <FootLabel htmlFor="tl">Total lines</FootLabel><Total id="tl" readOnly value="1" />
      <FootLabel htmlFor="tw">Total weight (Kg)</FootLabel><Total id="tw" readOnly value="5.00" />
      &nbsp;<Sep />&nbsp;&nbsp;
      <FootBtn><Svg w={14}><PencilShape fill={FACE} /></Svg>Edit Quantity</FootBtn>
    </FootBar>
  </Main>
);

const DateBtn = () => (
  <Cell $w={21} aria-label="Copy to lines"><Svg w={16}><LinesShape c="#888" accent="#bfe0f7" /><path d="M1 13h17v8H1z" fill="#cfe6f7" /><path d="M18 11v6M15 16h6l-3 4z" stroke={SKY} fill={SKY} strokeWidth="2" /></Svg></Cell>
);

const OrderWindow = () => (
  <Dialog aria-label="Sales order">
    <DialogTitle>
      <Svg w={15} box="0 0 18 18"><TagShape c="#2c4258" /></Svg>
      <Grow>SO - 11080 - Lee Higgins Test 2</Grow>
      <WinBtn $w={42} aria-label="Minimise"><Svg w={11} box="0 0 11 11"><path d="M0 5.500h11" stroke="#000" /></Svg></WinBtn>
      <WinBtn $w={38} aria-label="Maximise"><Svg w={11} box="0 0 11 11"><path d="M.5.5h10v10H.5z" stroke="#000" /></Svg></WinBtn>
      <WinBtn $w={42} aria-label="Close"><Svg w={11} box="0 0 11 11"><path d="M.5.5l10 10M10.500.5l-10 10" stroke="#000" /></Svg></WinBtn>
    </DialogTitle>
    <DialogBody>
      <Tabs><Tab $on>Order Entry</Tab><Tab>Order Details</Tab></Tabs>
      <Top>
        <Left>
          <Customer>
            <dl><dt>72693</dt><dd>Lee Higgins Test 2</dd><dd>123 Test Lane, Barnsley, S75 2TG</dd></dl>
            <Tool aria-label="Edit customer"><Svg><PencilShape /></Svg></Tool>
          </Customer>
          <Form>
            <FormLabel htmlFor="by">Ordered by</FormLabel>
            <Field>
              <Input id="by" defaultValue="Lee Higgins" />
              <Cell $w={21} aria-label="Add contact"><Svg w={18}><path d="M8 0h6v8h8v6h-8v8H8v-8H0V8h8z" fill={BLUE} /></Svg></Cell>
              <Cell $w={19}>...</Cell><Drop />
            </Field>
            <FormLabel $alert $second htmlFor="addr">Delivery address</FormLabel>
            <Field>
              <Input id="addr" defaultValue="123 Test Lane" />
              <Cell $w={21} aria-label="Add address"><Svg w={17}><path d="M8 0h6v8h8v6h-8v8H8v-8H0V8h8z" fill={BLUE} /></Svg></Cell>
              <Cell $w={21} aria-label="Edit address"><Svg w={16}><PencilShape /></Svg></Cell>
              <Cell $w={21} aria-label="Find address"><Svg w={18}><MagShape /></Svg></Cell>
              <Drop />
            </Field>
            <FormLabel htmlFor="ref">Order reference</FormLabel>
            <Field><Input id="ref" /></Field>
            <FormLabel $second htmlFor="dc">Delivery contact</FormLabel>
            <Field><Input id="dc" /></Field>
            <FormLabel htmlFor="tb">Taken by</FormLabel>
            <Combo id="tb" value="Ben.Fotheringham" />
            <FormLabel $second htmlFor="oa">Order analysis</FormLabel>
            <Combo id="oa" value="N/A" />
            <FormLabel htmlFor="ot">Order type</FormLabel>
            <Combo id="ot" value="On Account" />
          </Form>
        </Left>
        <Notes>
          <label htmlFor="notes">Internal Notes</label>
          <textarea id="notes" />
          {["Replacement", "Export/DGN Documentation Complete", "Must Go"].map(t => (
            <Tick key={t}><label htmlFor={t}>{t}</label><input type="checkbox" id={t} /></Tick>
          ))}
        </Notes>
        <Right>
          <Heads>
            <label htmlFor="on">Order number</label>
            <Bar $gap={2}><Field $ro $w={75}><Input id="on" readOnly value="11080" /></Field><Field $ro $w={44}><Input aria-label="Revision" readOnly value="3" /></Field></Bar>
            <label htmlFor="od">Order date</label>
            <Field><Input id="od" defaultValue="26/02/2026 20:43" /><Drop /></Field>
            <label htmlFor="rd">Req. date</label>
            <Field><Input id="rd" defaultValue="04/03/26" /><DateBtn /><Drop /></Field>
            <label htmlFor="pd">Prom. date</label>
            <Field><Input id="pd" defaultValue="04/03/26" /><DateBtn /><Drop /></Field>
          </Heads>
          <Combo label="Document type" value="Order" $big />
        </Right>
      </Top>
      <Tabs $thick $h={21}><Tab $on>Order Lines</Tab><Tab>Line Information</Tab></Tabs>
      <Lines>
        <Table>
          <Cols w={[32, 161, 334, 129, 81, 86, 85, null]} />
          <thead>
            <tr>
              <Head text="Lin" /><Head text="Variant code" /><Head text="Description" sort /><Head text="Revision description" />
              <Head text="Qty required" /><Head text="Qty to be sent" /><Head text="Net GBP / £" /><Head text="RSP net GBP /" pin={false} />
            </tr>
          </thead>
          <tbody>
            <SelRow $flush>
              <Num>1</Num><td>TEST-SALES-PRODUCT</td><td>TEST PRODUCT</td><td>Original</td>
              <Num>1.000</Num><Num>1.000</Num><Num>0.0100</Num><Num>0.010</Num>
            </SelRow>
          </tbody>
        </Table>
        <HTrack>
          <Thumb $size="4px" /><ScrollBtn aria-label="Scroll left"><Tri dir="left" /></ScrollBtn>
          <Thumb $size="590px" /><Grow /><ScrollBtn aria-label="Scroll right"><Tri dir="right" /></ScrollBtn>
        </HTrack>
      </Lines>
      <Detail>
        <Stack>
          <Bar $gap={7}>
            <div>
              <Cap $left htmlFor="code">Code</Cap>
              <Field $ro $w={173}>
                <Input id="code" readOnly value="TEST-SALES-PRODUC" />
                <Cell $w={21} $dim aria-label="Find product"><Svg w={18}><MagShape c="#8a8a8a" /></Svg></Cell>
                <Cell $w={17} $dim aria-label="Open list"><Tri w={7} /></Cell>
              </Field>
            </div>
            <Grow><Cap $left htmlFor="desc">Description</Cap><Field $ro><Input id="desc" readOnly value="TEST PRODUCT" /></Field></Grow>
          </Bar>
          <ToolRow>
            <LineTools>
              <Tool aria-label="Add line">{I.plus}</Tool><Tool aria-label="Delete line">{I.cross}</Tool><Tool aria-label="Notes">{I.lines}</Tool>
              <Tool aria-label="Copy">{I.docsCopy}</Tool><Tool aria-label="Attachments">{I.clip}</Tool><Tool $off aria-label="Add documents">{I.docsAdd}</Tool>
              <Tool aria-label="Edit line">{I.docsEdit}</Tool><Tool aria-label="Price lookup">{I.currency}</Tool><Tool $off aria-label="Edit build">{I.toolsEdit}</Tool>
              <Tool $off aria-label="Undo build">{I.toolsUndo}</Tool>
            </LineTools>
            <Grow />
            <Stack $w={110}>
              <Field $ro>
                <Cell $w={21} $lead aria-label="Manufacture lookup"><Svg w={18}><ToolsShape t="translate(0 2) scale(.85)" /><circle cx="17" cy="13" r="3.500" stroke={SKY} strokeWidth="1.500" /></Svg></Cell>
                <Input id="avail" readOnly />
              </Field>
              <Cap htmlFor="avail">Available to manf.</Cap>
            </Stack>
            <Stack $w={110}>
              <Field $ro>
                <Cell $w={21} $lead aria-label="Stock lookup"><Svg w={18}><path d="M0 15h3v-3h2V5l4-2 5 1v9l-4 1-4-1v2H0z" fill={GREY} /><circle cx="16" cy="12" r="3.500" stroke={GREY} strokeWidth="1.300" /><path d="M18 15l3 3" stroke={GREY} strokeWidth="2" /></Svg></Cell>
                <Input id="sl" $right readOnly value="-1.000" />
              </Field>
              <Cap htmlFor="sl">Stock level</Cap>
            </Stack>
          </ToolRow>
        </Stack>
        {([["Qty req'd", "1", "RSP", "£0.0100", false], ["Pack size", "1.000", "Disc", "0.0000%", true]] as const).map(([a, av, b, bv, ro]) => (
          <Stack $w={73} key={a}>
            <div><Cap htmlFor={a}>{a}</Cap><Field $ro={ro}><Input id={a} $right readOnly={ro} defaultValue={av} /></Field></div>
            <Field $ro={ro}><Input id={b} $right readOnly={ro} defaultValue={bv} /></Field>
            <Cap htmlFor={b}>{b}</Cap>
          </Stack>
        ))}
        <Stack $w={102}>
          <div><Cap htmlFor="rq">Required</Cap><Field><Input id="rq" defaultValue="04/03/26" /><Drop /></Field></div>
          <Field $ro><Input id="price" $right readOnly value="£0.0100" /></Field>
          <Cap htmlFor="price">Price</Cap>
        </Stack>
        <Stack $w={103}>
          <div><Cap htmlFor="pm">Promised</Cap><Field><Input id="pm" defaultValue="04/03/26" /><Drop /></Field></div>
          <Bar $gap={4}><Field $ro $w={48}><Input id="per" $right readOnly value="1.000" /></Field><Field $ro $w={51}><Input aria-label="Unit" readOnly value="Unit" /></Field></Bar>
          <Cap $left htmlFor="per">Price per</Cap>
        </Stack>
      </Detail>
      <Tabs $h={24} $gap={1}>
        {["Totals", "Previously Sold", "Delivery Address", "Statistics", "Email", "Payments", "Suggested Items", "Alternate Items"].map(t => <Tab key={t}>{t}</Tab>)}
        <Tab $on>Allocations</Tab>
      </Tabs>
      <Alloc>
        <AllocTable>
          <Table>
            <Cols w={[111, 95, 105, 216, 81]} />
            <thead><tr><Head text="Transaction type" /><Head text="Date/time" /><Head text="Quantity" /><Head text="Comments" /><Head text="Net cost" /></tr></thead>
          </Table>
        </AllocTable>
      </Alloc>
      <DialogFoot>
        <FootLeft>
          <Tool aria-label="Edit notes">{I.linesEdit}</Tool><Tool aria-label="Edit documents">{I.docsEditGrey}</Tool><Tool aria-label="Run documents">{I.docsRun}</Tool>
        </FootLeft>
        <Bar $gap={1}>
          <Tool aria-label="Process">{I.run}</Tool><Tool aria-label="Copy order">{I.docsBlue}</Tool><Tool aria-label="Email">{I.mail}</Tool>
          <Tool aria-label="Clear lines">{I.linesX}</Tool><Tool aria-label="Forward lines">{I.linesGo}</Tool><Tool aria-label="Take payment">{I.poundDown}</Tool>
          <Tool aria-label="Despatch">{I.truck}</Tool><Tool $off aria-label="Save documents">{I.saveDocs}</Tool><Tool aria-label="Attach">{I.clip}</Tool>
          <Tool $hot aria-label="Mark order as cancelled">{I.docsCancel}</Tool><Tool aria-label="Discard">{I.saveX}</Tool><Tool aria-label="Save">{I.save}</Tool>
        </Bar>
      </DialogFoot>
    </DialogBody>
  </Dialog>
);

const Desktop = () => (
  <TaskBar>
    <Task aria-label="Start"><Svg w={16} box="0 0 16 16"><path d="M0 2.300l6.500-1v6.200H0zM7.300 1.200L16 0v7.500H7.300zM0 8.300h6.500v6.200l-6.500-1zM7.300 8.300H16V16l-8.700-1.200z" fill="#fff" /></Svg></Task>
    <Task aria-label="Search"><Svg w={17} box="0 0 17 17"><circle cx="10.500" cy="6.500" r="5" stroke="#fff" strokeWidth="1.400" /><path d="M7 10.500L1 16.500" stroke="#fff" strokeWidth="1.400" /></Svg></Task>
    <Task aria-label="Task view"><Svg w={17} box="0 0 17 17"><path d="M.7 5h10v7H.7zM.7 3V1h10v2M.7 14v2h10v-2M14.500 1v1.500M14.500 8v8" stroke="#fff" strokeWidth="1.300" /><path d="M13.500 4h2.200v2.500h-2.200z" fill="#fff" /></Svg></Task>
    <Task $w={53} aria-label="Files"><Svg w={22} h={18} box="0 0 22 18"><path d="M0 0h8l1 2h12v16H0z" fill="#fbd568" /><path d="M0 4h21v13H0z" fill="#ffe59a" /><path d="M4 18v-7h14v7h-4v-4H8v4z" fill="#3fa7e6" /></Svg></Task>
    <Task aria-label="Browser"><Svg w={24} box="0 0 24 24"><circle cx="12" cy="12" r="12" fill="#fbc116" /><path d="M12 12L1.600 6A12 12 0 0011 24l6.200-9z" fill="#31a350" /><path d="M1.600 6A12 12 0 0122.400 6H12a6 6 0 00-5.200 9z" fill="#e33b2e" /><path d="M1.600 6l5.200 9L12 12z" fill="#31a350" /><path d="M1.600 6A12 12 0 0122.400 6H12a6 6 0 00-6 4.500L3.500 6z" fill="#e33b2e" /><circle cx="12" cy="12" r="6" fill="#fff" /><circle cx="12" cy="12" r="4.600" fill="#2f7de1" /></Svg></Task>
    <Task $on aria-label="Resincoat"><Logo w={24} /></Task>
    <Grow />
    <Task $w={26} aria-label="Hidden icons"><Svg w={12} h={7} box="0 0 12 7"><path d="M1 6l5-5 5 5" stroke="#fff" strokeWidth="1.300" /></Svg></Task>
    <Task $w={24} aria-label="Network"><Svg w={16} box="0 0 16 16"><path d="M4 3h11.500v8H4M9 11v3M6 14.500h7M.5 1.500h5v4h-5zM3 5.500V13" stroke="#fff" /></Svg></Task>
    <Task $w={24} aria-label="Volume"><Svg w={17} h={16} box="0 0 17 16"><path d="M.5 5.500H3L7 2v12L3 10.500H.5zM9 5.500c1.500 1.500 1.500 3.500 0 5M11.500 3.500c2.500 2.500 2.500 6.500 0 9M14 1.500c3.500 3.500 3.500 9.500 0 13" stroke="#fff" /></Svg></Task>
    <Clock>20:53<br />26/02/2026</Clock>
    <Task $w={44} aria-label="Notifications"><Svg w={17} h={16} box="0 0 17 16"><path d="M.7.7h15.600v11.600h-5L8.500 15 5.700 12.300h-5z" stroke="#fff" strokeWidth="1.200" /></Svg></Task>
    <Task $w={12} aria-label="Show desktop" />
  </TaskBar>
);

export default function App() {
  return (
    <Page>
      <GlobalStyle />
      <TitleBar>
        <Logo />
        <span>Resincoat</span>
        <WinBtn $w={46} aria-label="Minimise"><Svg w={10} box="0 0 10 10"><path d="M0 5.500h10" stroke="#888" /></Svg></WinBtn>
        <WinBtn $w={46} aria-label="Restore"><Svg w={10} box="0 0 10 10"><path d="M.5 2.500h7v7h-7zM2.500 2.500v-2h7v7h-2" stroke="#888" /></Svg></WinBtn>
        <WinBtn $w={46} aria-label="Close"><Svg w={11} box="0 0 11 11"><path d="M.5.5l10 10M10.500.5l-10 10" stroke="#888" /></Svg></WinBtn>
      </TitleBar>
      <MenuBar><button>File</button><button>Tools</button><button>Window</button><button>Help</button></MenuBar>
      <Work><Sidebar /><Split /><MainPane /></Work>
      <StatusBar>
        <Tool $size={34} aria-label="Find record"><Svg w={26} box="0 0 26 26"><path d="M0 0h20v14l-6 6v6H0z" fill={GREY} /><circle cx="20.500" cy="17" r="4.500" stroke={GREY} strokeWidth="1.500" fill="#fff" /><path d="M17 21l-4 4" stroke={GREY} strokeWidth="2.500" /></Svg></Tool>
        <Tool $size={34} aria-label="Product information"><Svg w={26} box="0 0 26 26"><path d="M3 5l9-3 12 3v2l-11 3L3 7z" fill="#77797c" /><path d="M3 7l10 3v13L3 19zM13 10l11-3v11l-11 5z" fill={GREY} /><path d="M20 11h5v13h-5z" fill="#fff" /><path d="M21 14h3v9h-3zM21 11h3v2h-3z" fill={GREY} /></Svg></Tool>
        <p>{"Logged In As: Ben.Fotheringham  Licenced To: Resincoat Limited"}</p>
        <Tool $size={34} aria-label="Cart"><Svg w={24} box="0 0 24 24"><path d="M1 3h3.500l3 16H20" stroke={GREY} strokeWidth="1.600" /><path d="M5 5h18l-2 12H7.500z" fill={GREY} /><circle cx="9.500" cy="21" r="1.800" fill={GREY} /><circle cx="18.500" cy="21" r="1.800" fill={GREY} /></Svg></Tool>
        <Tool $size={34} aria-label="Play"><Svg w={24} box="0 0 24 24"><circle cx="12" cy="12" r="10" stroke={GREY} strokeWidth="2" /><path d="M8 6l10 6-10 6z" fill={GREY} /></Svg></Tool>
        <Tool $size={34} aria-label="Support"><Svg w={24} box="0 0 24 24"><circle cx="12" cy="7.500" r="5.500" fill={GREY} /><path d="M5 9V6.500a7 6 0 0114 0V9" stroke={GREY} strokeWidth="1.500" /><path d="M3 24c0-6 2-9 5-9.500l4 3 4-3c3 .5 5 3.500 5 9.500z" fill={GREY} /><path d="M10 17l2 5 2-5z" fill="#fff" /></Svg></Tool>
      </StatusBar>
      <Desktop />
      <OrderWindow />
      <Tooltip role="tooltip">Mark order as cancelled</Tooltip>
    </Page>
  );
}
